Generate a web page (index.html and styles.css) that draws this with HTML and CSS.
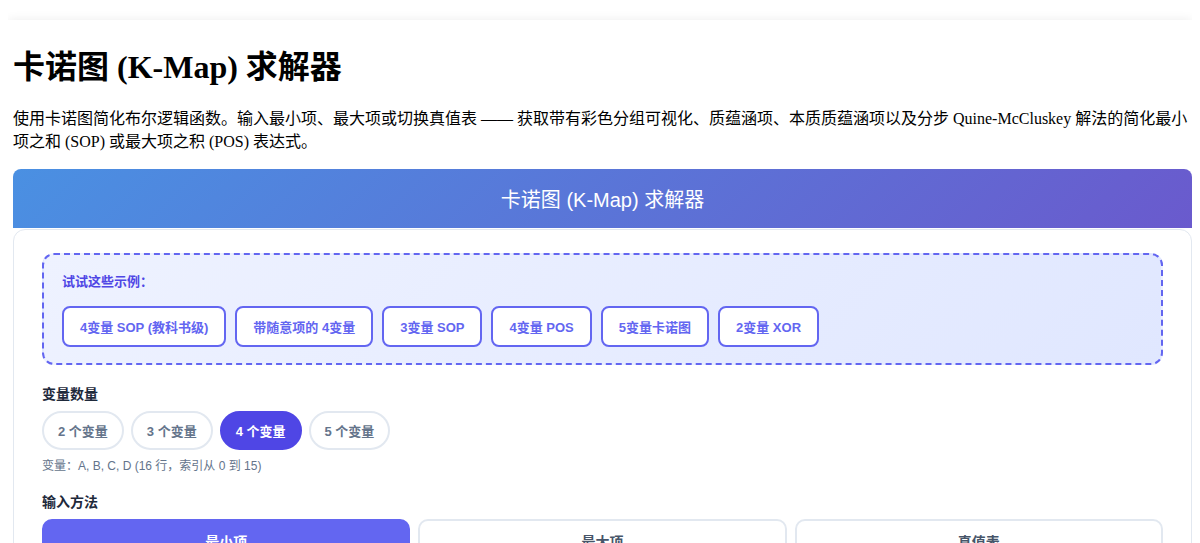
FILE: index.html
```html
<!DOCTYPE html>
<html lang="zh-CN">
<head>
  <meta charset="UTF-8" />
  <meta name="viewport" content="width=device-width, initial-scale=1.0"/>
  <title>卡诺图 (K-Map) 求解器</title>
  <link rel="stylesheet" href="styles.css">
</head>
<body>
  <div class="page">
    <h1>卡诺图 (K-Map) 求解器</h1>
    <p class="intro">使用卡诺图简化布尔逻辑函数。输入最小项、最大项或切换真值表 —— 获取带有彩色分组可视化、质蕴涵项、本质质蕴涵项以及分步 Quine-McCluskey 解法的简化最小项之和 (SOP) 或最大项之积 (POS) 表达式。</p>

    <div class="tool">
      <div class="tool-header">卡诺图 (K-Map) 求解器</div>

      <div class="tool-body">
        <div class="examples">
          <div class="examples-title">试试这些示例：</div>
          <div class="examples-list">
            <button class="example-btn">4变量 SOP (教科书级)</button>
            <button class="example-btn">带随意项的 4变量</button>
            <button class="example-btn">3变量 SOP</button>
            <button class="example-btn">4变量 POS</button>
            <button class="example-btn">5变量卡诺图</button>
            <button class="example-btn">2变量 XOR</button>
          </div>
        </div>

        <div class="field">
          <div class="field-label">变量数量</div>
          <div class="pills">
            <button class="pill">2 个变量</button>
            <button class="pill">3 个变量</button>
            <button class="pill active">4 个变量</button>
            <button class="pill">5 个变量</button>
          </div>
          <div class="hint">变量：A, B, C, D (16 行，索引从 0 到 15)</div>
        </div>

        <div class="field">
          <div class="field-label">输入方法</div>
          <div class="tabs">
            <button class="tab active">最小项</button>
            <button class="tab">最大项</button>
            <button class="tab">真值表</button>
          </div>
        </div>
      </div>
    </div>
  </div>
</body>
</html>
```

FILE: styles.css
```css
* { box-sizing: border-box; }

body {
  margin: 8px;
  font-family: "Liberation Serif", "Noto Sans CJK SC", serif;
  background: #fff;
  color: #000;
}

.page {
  margin-top: 12px;
  padding: 1px 0 0 5px;
  background: white;
  box-shadow: 0 0 10px rgba(0,0,0,0.08);
  height: 560px;
}

h1 {
  font-size: 32px;
  margin: 20px 0;
}

.intro {
  font-size: 16px;
  line-height: 23px;
  margin: 16px 0;
}

.tool {
  font-family: "Liberation Sans", "Noto Sans CJK SC", sans-serif;
}

.tool-header {
  background: linear-gradient(135deg, #4a90e2, #6a5acd);
  color: white;
  font-size: 20px;
  text-align: center;
  padding: 15px;
  border-radius: 8px 8px 0 0;
}

.tool-body {
  margin-top: 1px;
  border: 1px solid #e2e8f0;
  border-radius: 12px;
  padding: 23px 28px;
}

.examples {
  border: 2px dashed #6366f1;
  border-radius: 12px;
  background: linear-gradient(135deg, #eef2ff, #e0e7ff);
  padding: 16px 18px;
}

.examples-title {
  font-size: 13px;
  font-weight: bold;
  color: #4f46e5;
}

.examples-list {
  display: flex;
  flex-wrap: wrap;
  gap: 9px;
  margin-top: 16px;
}

button {
  font-family: "Liberation Sans", "Noto Sans CJK SC", sans-serif;
  cursor: pointer;
}

.example-btn {
  background: white;
  border: 2px solid #6366f1;
  border-radius: 8px;
  color: #6366f1;
  font-size: 13px;
  font-weight: bold;
  padding: 9px 16px;
}

.field {
  margin-top: 18px;
}

.field-label {
  font-size: 14px;
  font-weight: bold;
  color: #1e293b;
  margin-bottom: 8px;
}

.pills {
  display: flex;
  gap: 7px;
}

.pill {
  background: white;
  border: 2px solid #e2e8f0;
  border-radius: 20px;
  color: #64748b;
  font-size: 13px;
  font-weight: bold;
  padding: 8px 14px;
}

.pill.active {
  background: #4f46e5;
  border-color: #4f46e5;
  color: white;
}

.hint {
  font-size: 12px;
  color: #64748b;
  margin-top: 6px;
}

.tabs {
  display: flex;
  gap: 8px;
}

.tab {
  flex: 1;
  background: white;
  border: 2px solid #e2e8f0;
  border-radius: 10px;
  color: #475569;
  font-size: 14px;
  font-weight: bold;
  padding: 10px;
}

.tab.active {
  background: #6366f1;
  border-color: #6366f1;
  color: white;
}
```
